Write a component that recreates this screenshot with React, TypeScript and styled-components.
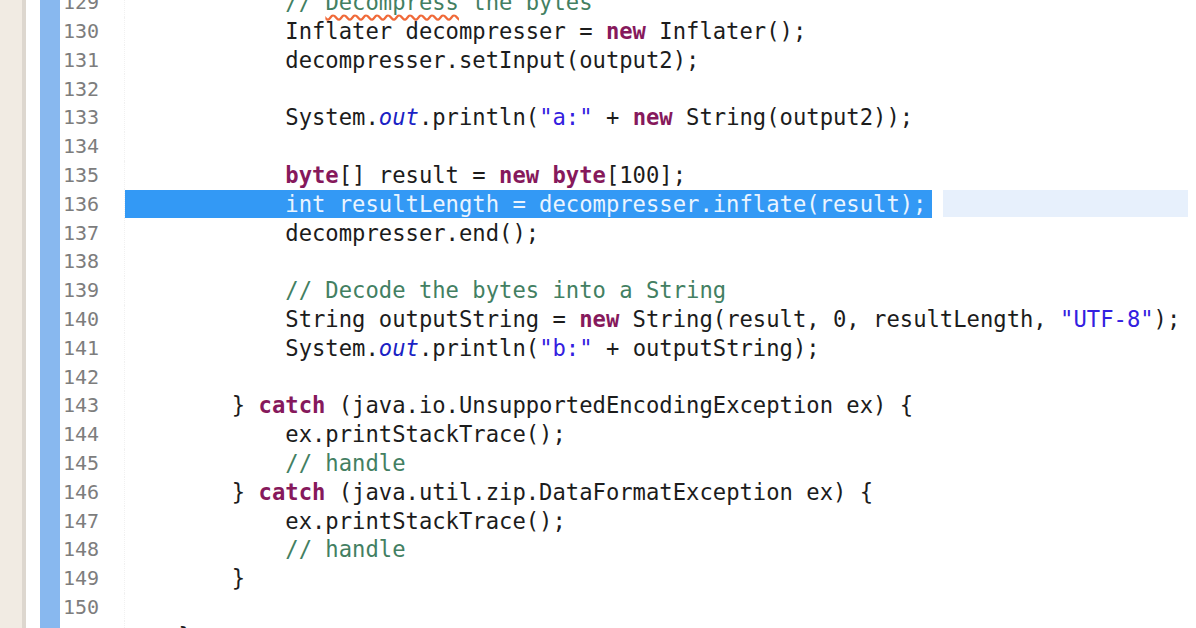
import React from "react";
import styled, { createGlobalStyle } from "styled-components";

const GlobalStyle = createGlobalStyle`
  html, body { margin: 0; padding: 0; background: #ffffff; overflow: hidden; }
  #root { width: 1196px; height: 628px; }
`;

const Editor = styled.div`
  display: flex;
  width: 1196px;
  height: 628px;
  overflow: hidden;
  background: #ffffff;
`;

const OuterMargin = styled.div`
  width: 22px;
  flex: none;
  background: #f1ebe3;
  border-right: 4px solid #ddd7cf;
`;

const Spacer = styled.div`
  width: 14px;
  flex: none;
  background: #ffffff;
`;

const ChangeBar = styled.div`
  width: 20px;
  flex: none;
  background: #88b8ef;
`;

const Lines = styled.div`
  flex: 1;
  display: flex;
  flex-direction: column;
  margin-top: -12.2px;
`;

const Row = styled.div`
  display: grid;
  grid-template-columns: 65px 1fr;
  height: 28.8px;
  flex: none;
  align-items: stretch;
`;

const LineNo = styled.div`
  display: flex;
  align-items: center;
  padding-left: 3px;
  font-family: "DejaVu Sans Mono", "Liberation Mono", monospace;
  font-size: 20px;
  color: #7d7d7d;
  border-right: 1px dotted #f1f1f1;
`;

const Code = styled.div`
  display: flex;
  align-items: center;
  white-space: pre;
  font-family: "DejaVu Sans Mono", "Liberation Mono", monospace;
  font-size: 22.2px;
  color: #1c1c1c;
`;

const Selection = styled.span`
  display: flex;
  align-items: center;
  align-self: stretch;
  margin: 0.5px 0;
  padding-right: 6px;
  background: #3399f5;
  color: #eaf4ff;
`;

const CurrentLineFill = styled.span`
  align-self: stretch;
  flex: 1;
  margin: 1px 8px 1px 11px;
  background: #e7f0fc;
`;

type TokenKind = "plain" | "kw" | "comment" | "str" | "field" | "spell";

const Tok = styled.span<{ $kind: TokenKind }>`
  color: ${({ $kind }) =>
    $kind === "kw"
      ? "#86195c"
      : $kind === "comment" || $kind === "spell"
      ? "#437f62"
      : $kind === "str"
      ? "#3320e0"
      : $kind === "field"
      ? "#1a22c4"
      : "inherit"};
  font-weight: ${({ $kind }) => ($kind === "kw" ? 600 : 400)};
  font-style: ${({ $kind }) => ($kind === "field" ? "italic" : "normal")};
  text-decoration: ${({ $kind }) =>
    $kind === "spell" ? "underline wavy #f06a3a" : "none"};
  text-underline-offset: 4px;
`;

type Token = [TokenKind, string];
type Line = { no: number; tokens: Token[]; selected?: boolean };

const I3 = "            ";
const I2 = "        ";
const I1 = "    ";

const lines: Line[] = [
  { no: 129, tokens: [["plain", I3], ["comment", "// "], ["spell", "Decompress"], ["comment", " the bytes"]] },
  { no: 130, tokens: [["plain", I3 + "Inflater decompresser = "], ["kw", "new"], ["plain", " Inflater();"]] },
  { no: 131, tokens: [["plain", I3 + "decompresser.setInput(output2);"]] },
  { no: 132, tokens: [] },
  {
    no: 133,
    tokens: [
      ["plain", I3 + "System."],
      ["field", "out"],
      ["plain", ".println("],
      ["str", '"a:"'],
      ["plain", " + "],
      ["kw", "new"],
      ["plain", " String(output2));"],
    ],
  },
  { no: 134, tokens: [] },
  {
    no: 135,
    tokens: [
      ["plain", I3],
      ["kw", "byte"],
      ["plain", "[] result = "],
      ["kw", "new"],
      ["plain", " "],
      ["kw", "byte"],
      ["plain", "[100];"],
    ],
  },
  { no: 136, selected: true, tokens: [["plain", I3 + "int resultLength = decompresser.inflate(result);"]] },
  { no: 137, tokens: [["plain", I3 + "decompresser.end();"]] },
  { no: 138, tokens: [] },
  { no: 139, tokens: [["plain", I3], ["comment", "// Decode the bytes into a String"]] },
  {
    no: 140,
    tokens: [
      ["plain", I3 + "String outputString = "],
      ["kw", "new"],
      ["plain", " String(result, 0, resultLength, "],
      ["str", '"UTF-8"'],
      ["plain", ");"],
    ],
  },
  {
    no: 141,
    tokens: [
      ["plain", I3 + "System."],
      ["field", "out"],
      ["plain", ".println("],
      ["str", '"b:"'],
      ["plain", " + outputString);"],
    ],
  },
  { no: 142, tokens: [] },
  {
    no: 143,
    tokens: [["plain", I2 + "} "], ["kw", "catch"], ["plain", " (java.io.UnsupportedEncodingException ex) {"]],
  },
  { no: 144, tokens: [["plain", I3 + "ex.printStackTrace();"]] },
  { no: 145, tokens: [["plain", I3], ["comment", "// handle"]] },
  {
    no: 146,
    tokens: [["plain", I2 + "} "], ["kw", "catch"], ["plain", " (java.util.zip.DataFormatException ex) {"]],
  },
  { no: 147, tokens: [["plain", I3 + "ex.printStackTrace();"]] },
  { no: 148, tokens: [["plain", I3], ["comment", "// handle"]] },
  { no: 149, tokens: [["plain", I2 + "}"]] },
  { no: 150, tokens: [] },
  { no: 151, tokens: [["plain", I1 + "}"]] },
];

const renderTokens = (tokens: Token[]) =>
  tokens.map(([kind, text], i) => (
    <Tok key={i} $kind={kind}>
      {text}
    </Tok>
  ));

export default function App() {
  return (
    <>
      <GlobalStyle />
      <Editor>
        <OuterMargin />
        <Spacer />
        <ChangeBar />
        <Lines>
          {lines.map((line) => (
            <Row key={line.no}>
              <LineNo>{line.no}</LineNo>
              <Code>
                {line.selected ? (
                  <>
                    <Selection>{line.tokens.map(([, t]) => t).join("")}</Selection>
                    <CurrentLineFill />
                  </>
                ) : (
                  renderTokens(line.tokens)
                )}
              </Code>
            </Row>
          ))}
        </Lines>
      </Editor>
    </>
  );
}
